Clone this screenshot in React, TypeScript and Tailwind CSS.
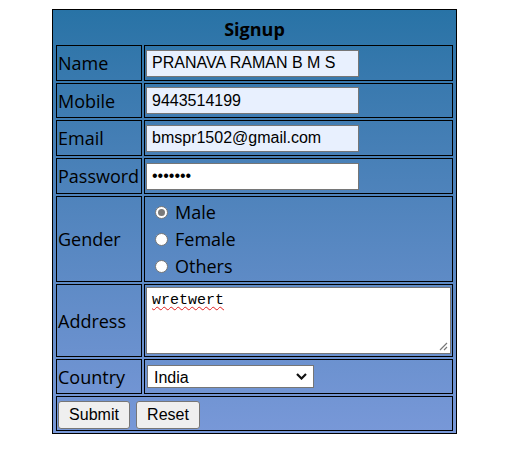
const labelCell = "h-[36px] w-[86px] border border-black p-px text-[18px] leading-[24px]";
const valueCell = "border border-black p-px";
const textInput =
  "block h-[27px] w-[213px] border border-[#767676] px-[5px] text-[16px] text-black outline-none [font-family:'Liberation_Sans',Arial,sans-serif]";

function Radio({ checked }: { checked?: boolean }) {
  return (
    <span className="ml-[9px] flex h-[13px] w-[13px] items-center justify-center rounded-full border border-[#767676] bg-white">
      {checked && <span className="h-[7px] w-[7px] rounded-full bg-[#7a7a7a]" />}
    </span>
  );
}

export default function App() {
  return (
    <div className="min-h-[476px] bg-white pt-[9px] text-black [font-family:'Open_Sans',sans-serif]">
      <table className="ml-[52px] w-[405px] border-separate border-spacing-[2px] border border-black bg-linear-to-b from-[#2873a6] to-[#7898d8] px-px">
        <tbody>
          <tr>
            <th colSpan={2} className="h-[30px] p-0 pt-[4px] text-[18px] font-bold">
              Signup
            </th>
          </tr>
          <tr>
            <td className={labelCell}>Name</td>
            <td className={valueCell}>
              <input className={textInput + " bg-[#e8f0fe]"} defaultValue="PRANAVA RAMAN B M S" />
            </td>
          </tr>
          <tr>
            <td className={labelCell + " !h-[35px]"}>Mobile</td>
            <td className={valueCell}>
              <input className={textInput + " bg-[#e8f0fe]"} defaultValue="9443514199" />
            </td>
          </tr>
          <tr>
            <td className={labelCell}>Email</td>
            <td className={valueCell}>
              <input className={textInput + " bg-[#e8f0fe]"} defaultValue="bmspr1502@gmail.com" />
            </td>
          </tr>
          <tr>
            <td className={labelCell}>Password</td>
            <td className={valueCell}>
              <input type="password" className={textInput + " bg-white"} defaultValue="1234567" />
            </td>
          </tr>
          <tr>
            <td className={labelCell + " !h-[86px]"}>Gender</td>
            <td className={valueCell + " text-[18px]"}>
              {[
                ["Male", true],
                ["Female", false],
                ["Others", false],
              ].map(([label, checked]) => (
                <div key={label as string} className="flex h-[27px] items-center">
                  <Radio checked={checked as boolean} />
                  <span className="ml-[7px]">{label}</span>
                </div>
              ))}
            </td>
          </tr>
          <tr>
            <td className={labelCell + " !h-[73px]"}>Address</td>
            <td className={valueCell}>
              <div className="relative h-[67px] w-[305px] border border-[#767676] bg-white pl-[5px] pt-[3px] text-[15px] leading-[20px] [font-family:'Liberation_Mono',monospace]">
                <span className="underline decoration-[#e02020] decoration-wavy decoration-1 underline-offset-[2px]">
                  wretwert
                </span>
                <svg className="absolute bottom-[2px] right-[2px]" width="10" height="10" viewBox="0 0 10 10">
                  <path d="M9 2 L2 9 M9 6 L6 9" stroke="#777" strokeWidth="1.2" fill="none" />
                </svg>
              </div>
            </td>
          </tr>
          <tr>
            <td className={labelCell + " !h-[35px]"}>Country</td>
            <td className={valueCell}>
              <div className="relative ml-px w-[167px]">
                <select
                  defaultValue="India"
                  className="block h-[23px] w-[167px] appearance-none border border-[#767676] bg-white pl-[6px] text-[16px] text-black outline-none [font-family:'Liberation_Sans',Arial,sans-serif]"
                >
                  <option>India</option>
                  <option>USA</option>
                  <option>UK</option>
                </select>
                <svg className="pointer-events-none absolute right-[7px] top-[8px]" width="11" height="7" viewBox="0 0 11 7">
                  <path d="M1 1 L5.5 5.5 L10 1" stroke="#111" strokeWidth="2.2" fill="none" />
                </svg>
              </div>
            </td>
          </tr>
          <tr>
            <td colSpan={2} className="h-[35px] border border-black p-px">
              <div className="flex gap-[6px] pt-[2px] [font-family:'Liberation_Sans',Arial,sans-serif]">
                <button className="h-[28px] w-[72px] rounded-[3px] border border-[#767676] bg-[#efefef] text-[16px] text-black">
                  Submit
                </button>
                <button className="h-[28px] w-[64px] rounded-[3px] border border-[#767676] bg-[#efefef] text-[16px] text-black">
                  Reset
                </button>
              </div>
            </td>
          </tr>
        </tbody>
      </table>
    </div>
  );
}
